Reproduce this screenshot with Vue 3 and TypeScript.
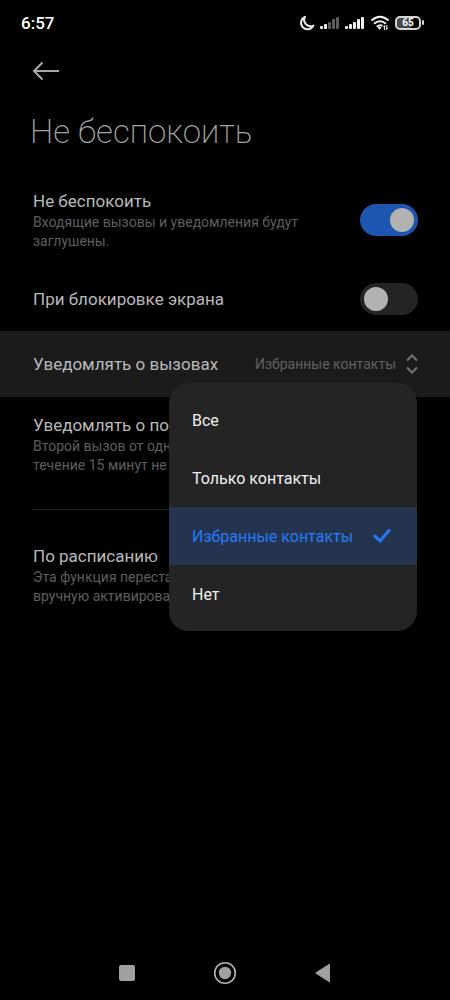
<script setup lang="ts">
import { ref } from 'vue'

const options: string[] = ['Все', 'Только контакты', 'Избранные контакты', 'Нет']
const selected = ref<string>('Избранные контакты')
const dnd = ref<boolean>(true)
const onLock = ref<boolean>(false)
const bars = [3, 5, 7, 10, 12]
const signals = [2, 5]
</script>

<template>
  <div class="screen">
    <header class="status">
      <time class="clock">6:57</time>
      <div class="indicators">
        <svg class="moon" width="16" height="16" viewBox="0 0 16 16" aria-hidden="true">
          <path d="M6 1.8A6.5 6.5 0 1 0 14.4 10.6A6.4 6.4 0 0 1 6 1.8Z" />
        </svg>
        <svg v-for="level in signals" :key="level" class="signal" width="20" height="14" viewBox="0 0 20 14" aria-hidden="true">
          <rect v-for="(h, i) in bars" :key="i" :class="{ weak: i >= level }" :x="i * 4" :y="13 - h" width="3" :height="h" rx="1" />
        </svg>
        <svg class="wifi" width="20" height="16" viewBox="0 0 20 16" aria-hidden="true">
          <path d="M1.4 5.6Q10-2 18.6 5.6M4 8.8Q10 3.6 16 8.8M6.8 11.8Q10 9 12.4 11" />
          <path class="solid" d="M7.6 12.6Q9.6 11 11.6 12.6L9.6 14.8ZM13 12L14.4 10L15.8 12ZM15.4 13L16.8 15L18.2 13Z" />
          <path class="thin" d="M14.4 12V15M16.8 10V13" />
        </svg>
        <span class="battery"><span class="cell">65</span><i class="tip"></i></span>
      </div>
    </header>

    <div class="toolbar">
      <button class="back" type="button" aria-label="Назад">
        <svg width="28" height="20" viewBox="0 0 28 20" aria-hidden="true">
          <path d="M10.5 1.5L2 10L10.5 18.5M2 10H27" />
        </svg>
      </button>
    </div>

    <main>
      <h1>Не беспокоить</h1>

      <div class="row">
        <label class="text" for="dnd">
          <span class="name">Не беспокоить</span>
          <span class="note">Входящие вызовы и уведомления будут заглушены.</span>
        </label>
        <input id="dnd" v-model="dnd" class="switch" type="checkbox" role="switch" />
      </div>

      <div class="row">
        <label class="text name" for="lock">При блокировке экрана</label>
        <input id="lock" v-model="onLock" class="switch" type="checkbox" role="switch" />
      </div>

      <div class="row active">
        <label class="text name" for="calls">Уведомлять о вызовах</label>
        <div class="picker">
          <select id="calls" v-model="selected">
            <option v-for="option in options" :key="option">{{ option }}</option>
          </select>
          <svg width="12" height="20" viewBox="0 0 12 20" aria-hidden="true">
            <path d="M1 6.5L6 1.5L11 6.5M1 13.5L6 18.5L11 13.5" />
          </svg>
        </div>
        <div class="menu" role="listbox" aria-label="Уведомлять о вызовах">
          <button
            v-for="option in options"
            :key="option"
            type="button"
            role="option"
            :aria-selected="option === selected"
            :class="{ chosen: option === selected }"
            @click="selected = option"
          >
            {{ option }}
            <svg v-if="option === selected" width="18" height="16" viewBox="0 0 18 16" aria-hidden="true">
              <path d="M2 8.2L7 13L16 2.4" />
            </svg>
          </button>
        </div>
      </div>

      <div class="row">
        <div class="text lines">
          <span class="name">Уведомлять о повторных</span>
          <span class="note">Второй вызов от одного абонента в</span>
          <span class="note">течение 15 минут не заглушается.</span>
        </div>
      </div>

      <hr />

      <div class="row">
        <div class="text lines">
          <span class="name">По расписанию</span>
          <span class="note">Эта функция перестанет работать, если</span>
          <span class="note">вручную активировать режим.</span>
        </div>
      </div>
    </main>

    <nav class="navbar" aria-label="Системная навигация">
      <button type="button" aria-label="Недавние">
        <svg width="24" height="24" viewBox="0 0 24 24"><rect x="4" y="4" width="16" height="16" rx="2" /></svg>
      </button>
      <button type="button" aria-label="Домой">
        <svg width="24" height="24" viewBox="0 0 24 24"><circle class="ring" cx="12" cy="12" r="10.3" /><circle cx="12" cy="12" r="6.2" /></svg>
      </button>
      <button type="button" aria-label="Назад">
        <svg width="24" height="24" viewBox="0 0 24 24"><path d="M19 3.5V20.5Q19 21.5 18 21L5 12.8Q4 12 5 11.2L18 3Q19 2.5 19 3.5Z" /></svg>
      </button>
    </nav>
  </div>
</template>

<style>
body {
  margin: 0;
  background: #000;
}
</style>

<style scoped>
.screen {
  display: flex;
  flex-direction: column;
  min-height: 100vh;
  background: #000;
  color: #b9b9b9;
  font-family: Roboto, "Noto Sans", sans-serif;
}
button {
  padding: 0;
  border: 0;
  background: none;
  color: inherit;
  font: inherit;
}
svg {
  display: block;
  flex: none;
}
.status {
  display: flex;
  align-items: center;
  justify-content: space-between;
  height: 45px;
  padding: 0 26px 0 21px;
}
.clock {
  color: #fff;
  font-size: 17px;
  font-weight: 500;
  line-height: 20px;
}
.indicators {
  display: flex;
  align-items: center;
  gap: 5px;
}
.moon {
  fill: none;
  stroke: #e8e8e8;
  stroke-width: 2;
  stroke-linejoin: round;
}
.signal {
  fill: #f2f2f2;
}
.signal .weak {
  fill: #5c5c5c;
}
.wifi {
  fill: none;
  stroke: #f2f2f2;
  stroke-width: 2;
}
.wifi .solid {
  fill: #f2f2f2;
  stroke: none;
}
.wifi .thin {
  stroke-width: 1;
}
.battery {
  display: flex;
  align-items: center;
  gap: 1px;
}
.cell {
  box-sizing: border-box;
  width: 26px;
  height: 14px;
  border: 2px solid #d4d4d4;
  border-radius: 5px;
  background: linear-gradient(90deg, #4a4a4a 65%, #000 65%);
  color: #fff;
  font-size: 10px;
  font-weight: 700;
  line-height: 10px;
  text-align: center;
}
.tip {
  width: 2px;
  height: 5px;
  border-radius: 1px;
  background: #d4d4d4;
}
.toolbar {
  padding: 16px 32px 17px;
}
.back svg {
  fill: none;
  stroke: #a9a9a9;
  stroke-width: 2;
}
h1 {
  margin: 0;
  padding: 10px 30px 21px;
  color: #a6a6a6;
  font-size: 33px;
  font-weight: 200;
  line-height: 40px;
}
.row {
  position: relative;
  display: flex;
  align-items: center;
  gap: 16px;
  box-sizing: border-box;
  min-height: 64px;
  padding: 16px 33px;
}
.row.active {
  min-height: 66px;
  background: #1b1b1b;
}
.text {
  flex: 1;
  min-width: 0;
}
.name {
  display: block;
  font-size: 17px;
  line-height: 24px;
}
.note {
  display: block;
  max-width: 290px;
  color: #5e5e5e;
  font-size: 14px;
  line-height: 19px;
}
.lines {
  overflow: hidden;
  white-space: nowrap;
}
.switch {
  flex: none;
  box-sizing: border-box;
  width: 58px;
  height: 32px;
  margin: 0 -1px 0 0;
  padding: 4px;
  border-radius: 16px;
  background: #242424;
  appearance: none;
}
.switch::before {
  content: "";
  display: block;
  width: 24px;
  height: 24px;
  border-radius: 50%;
  background: #b2b2b2;
}
.switch:checked {
  background: #1c56b0;
}
.switch:checked::before {
  margin-left: auto;
}
.picker {
  display: flex;
  align-items: center;
  gap: 9px;
  margin-right: -1px;
}
.picker select {
  padding: 0;
  border: 0;
  background: none;
  color: #616161;
  font: inherit;
  font-size: 14px;
  line-height: 20px;
  appearance: none;
}
.picker svg {
  fill: none;
  stroke: #747474;
  stroke-width: 2;
}
.menu {
  position: absolute;
  z-index: 1;
  top: 52px;
  right: 33px;
  box-sizing: border-box;
  width: 248px;
  padding: 8px 0;
  overflow: hidden;
  border-radius: 20px;
  background: #242424;
  color: #f0f0f0;
}
.menu button {
  display: flex;
  align-items: center;
  justify-content: space-between;
  box-sizing: border-box;
  width: 100%;
  height: 58px;
  padding: 0 26px 0 23px;
  font-size: 16px;
  text-align: left;
}
.menu .chosen {
  background: #24344f;
  color: #277af7;
}
.menu svg {
  fill: none;
  stroke: #277af7;
  stroke-width: 3;
  stroke-linecap: round;
  stroke-linejoin: round;
}
hr {
  height: 1px;
  margin: 18px 33px;
  border: 0;
  background: #242424;
}
.navbar {
  display: flex;
  justify-content: center;
  gap: 74px;
  margin-top: auto;
  padding: 15px;
}
.navbar svg {
  fill: #a0a0a0;
}
.navbar .ring {
  fill: none;
  stroke: #b4b4b4;
  stroke-width: 1.6;
}
</style>
